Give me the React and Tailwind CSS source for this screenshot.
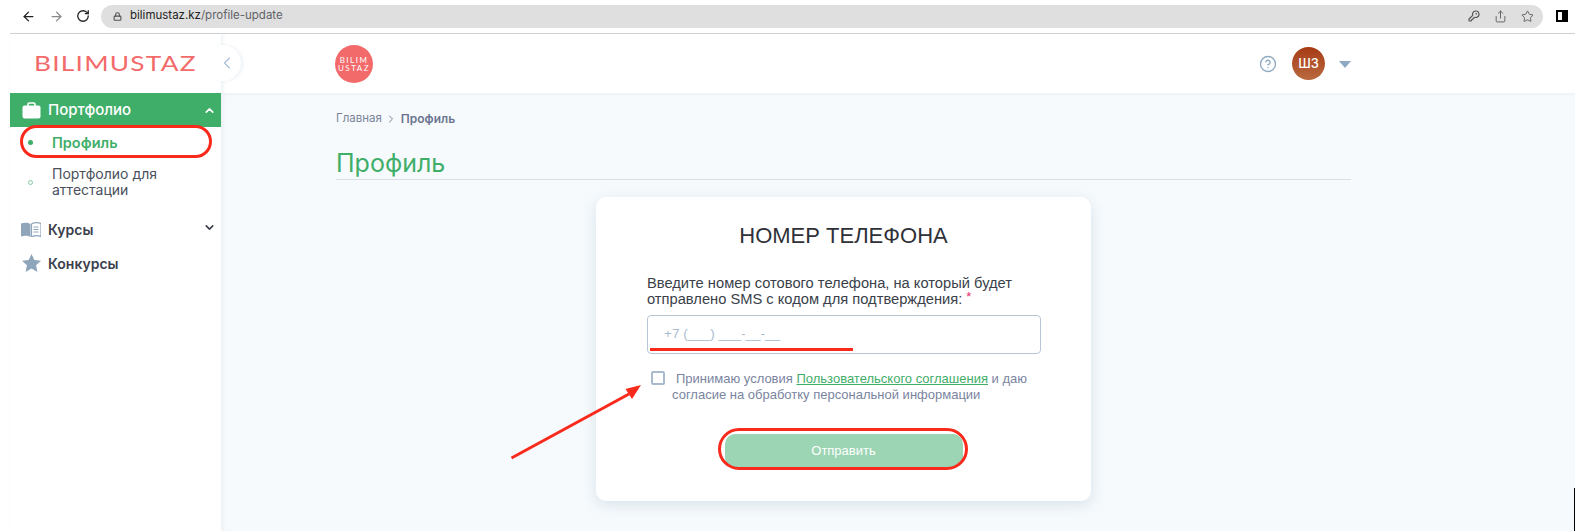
import React from "react";
import { ArrowLeft, ArrowRight, RotateCw, Lock, KeyRound, Share, Star, ChevronLeft, ChevronUp, ChevronDown, ChevronRight, CircleHelp } from "lucide-react";

function Briefcase() {
  return (
    <svg width="19" height="17" viewBox="0 0 19 17" fill="none">
      <path d="M6 4V2.2C6 1.5 6.6 1 7.2 1h4.6c.6 0 1.2.5 1.2 1.2V4" stroke="#fff" strokeWidth="1.6" />
      <rect x="0.5" y="3.5" width="18" height="13" rx="2" fill="#fff" />
    </svg>
  );
}

function Book() {
  return (
    <svg width="20" height="15" viewBox="0 0 20 15">
      <path d="M0 1.5C3 .5 7 .5 9.5 2v13C7 13.5 3 13.5 0 14.5z" fill="#8fa5ba" />
      <path d="M10.5 2C13 .5 17 .5 20 1.5v13c-3-1-7-1-9.5.5z" fill="#fff" stroke="#8fa5ba" strokeWidth="1.2" />
      <path d="M12.5 5h5M12.5 7.5h5M12.5 10h5" stroke="#8fa5ba" strokeWidth="1" />
    </svg>
  );
}

function StarSolid() {
  return (
    <svg width="19" height="18" viewBox="0 0 19 18">
      <path d="M9.5 0l2.8 6 6.7.8-4.9 4.5 1.3 6.6-5.9-3.3-5.9 3.3 1.3-6.6L0 6.8 6.7 6z" fill="#8fa5ba" />
    </svg>
  );
}

function SidePanelIcon() {
  return (
    <div className="flex h-[12px] w-[12px] border-2 border-black">
      <div className="w-1/2 bg-white" />
      <div className="w-1/2 bg-black" />
    </div>
  );
}

function Toolbar() {
  return (
    <div className="flex h-[33px] items-center bg-white pb-[1px]">
      <div className="flex items-center pl-[21px]">
        <ArrowLeft size={15} strokeWidth={2} className="text-[#222]" />
        <ArrowRight size={15} strokeWidth={2} className="ml-[13px] text-[#8a8a8a]" />
        <RotateCw size={14} strokeWidth={2.2} className="ml-[12px] text-[#222]" />
      </div>
      <div className="ml-[11px] flex h-[23px] w-[1442px] items-center rounded-full bg-[#dfdfdf] pl-[12px] pr-[9px]">
        <Lock size={9} strokeWidth={3} className="text-[#555]" />
        <span className="ml-[8px] font-['Inter',sans-serif] text-[11.5px] text-[#222]">bilimustaz.kz<span className="text-[#5f6368]">/profile-update</span></span>
        <div className="ml-auto flex items-center gap-[14px] text-[#555]">
          <KeyRound size={12} strokeWidth={2.4} />
          <Share size={13} strokeWidth={1.6} />
          <Star size={13} strokeWidth={1.6} />
        </div>
      </div>
      <div className="ml-[13px]"><SidePanelIcon /></div>
    </div>
  );
}

function Sidebar() {
  return (
    <aside className="relative z-20 w-[211px] shrink-0 bg-white font-['Inter',sans-serif] shadow-[2px_0_4px_rgba(210,220,230,0.35)]">
      <div className="relative flex h-[59px] items-center pb-[2px] pl-[24px]">
        <span className="origin-left scale-x-[1.25] font-['Lato',sans-serif] text-[21px] font-normal leading-none tracking-[1px] text-[#f26a6a]">BILIMUSTAZ</span>
        <div className="absolute left-[195px] top-[11px] flex h-[36px] w-[36px] items-center justify-center rounded-full bg-white pl-[8px] shadow-[2px_0_3px_rgba(215,225,235,0.45)]">
          <ChevronLeft size={20} strokeWidth={1.4} className="text-[#a9c0d6]" />
        </div>
      </div>
      <div className="flex h-[34px] items-center bg-[#3fae69] pl-[12px] pr-[5px] text-white">
        <Briefcase />
        <span className="ml-[7px] pt-[1px] text-[15px] font-medium">Портфолио</span>
        <ChevronUp size={13} strokeWidth={3} className="ml-auto" />
      </div>
      <div className="flex h-[31px] items-center pl-[18px]">
        <span className="h-[5px] w-[5px] rounded-full bg-[#3fae69]" />
        <span className="ml-[19px] text-[14.5px] font-semibold text-[#3fae69]">Профиль</span>
      </div>
      <div className="flex items-center pl-[18px] pt-[8px]">
        <span className="h-[5px] w-[5px] rounded-full border border-[#7fcb9c]" />
        <span className="ml-[19px] text-[14px] leading-[16px] text-[#4a505c]">Портфолио для<br />аттестации</span>
      </div>
      <div className="mt-[14px] flex h-[34px] items-center pl-[11px] pr-[5px]">
        <Book />
        <span className="ml-[7px] text-[14px] font-semibold text-[#3b404c]">Курсы</span>
        <ChevronDown size={13} strokeWidth={3} className="ml-auto -translate-y-[2px] text-[#3b404c]" />
      </div>
      <div className="flex h-[34px] items-center pl-[12px]">
        <StarSolid />
        <span className="ml-[7px] text-[14px] font-semibold text-[#3b404c]">Конкурсы</span>
      </div>
    </aside>
  );
}

function Header() {
  return (
    <header className="relative z-10 flex h-[59px] items-center bg-white pl-[114px] shadow-[0_1px_3px_rgba(215,225,235,0.4)]">
      <div className="flex h-[38px] w-[38px] flex-col items-center justify-center rounded-full bg-[#f26a6a] font-['Lato',sans-serif] text-[8px] font-normal leading-[8px] tracking-[1.5px] text-white">
        <span>BILIM</span>
        <span>USTAZ</span>
      </div>
      <CircleHelp size={18} strokeWidth={1.8} className="ml-[886px] text-[#8ea9c1]" />
      <div className="ml-[15px] flex h-[33px] w-[33px] items-center justify-center rounded-full bg-gradient-to-b from-[#a63a14] to-[#b9693f] font-['Inter',sans-serif] text-[13px] font-medium text-white">ШЗ</div>
      <div className="ml-[14px] mt-[1px] h-0 w-0 border-x-[6.5px] border-t-[7px] border-x-transparent border-t-[#8ea9c1]" />
    </header>
  );
}

function Card() {
  return (
    <div className="mx-auto mt-[17px] h-[304px] w-[495px] rounded-[10px] bg-white px-[51px] pt-[26px] font-['Liberation_Sans',sans-serif] shadow-[0_4px_14px_rgba(190,205,220,0.5)]">
      <h2 className="text-center text-[22px] leading-[26px] text-[#2f3138]">НОМЕР ТЕЛЕФОНА</h2>
      <p className="mt-[26px] text-[14.7px] leading-[16px] text-[#3a3f4a]">
        Введите номер сотового телефона, на который будет<br />
        отправлено SMS с кодом для подтверждения: <span className="relative -top-[3px] text-[13px] text-[#ef2f6b]">*</span>
      </p>
      <div className="mt-[7px] flex h-[39px] w-[394px] items-center rounded-[4px] border border-[#b6c6d6] pl-[16px] text-[13.5px] text-[#a9bccf]">+7 (___) ___-__-__</div>
      <div className="mt-[16px] flex">
        <span className="mt-[1px] ml-[4px] h-[14px] w-[14px] shrink-0 rounded-[2px] border-2 border-[#a9bacd]" />
        <p className="ml-[7px] pt-[1px] text-[13px] leading-[16px] text-[#7a84a0]">
          <span className="ml-[4px]">Принимаю условия </span>
          <a className="text-[#3fae69] underline">Пользовательского соглашения</a> и даю<br />
          согласие на обработку персональной информации
        </p>
      </div>
      <div className="mt-[31px] flex justify-center">
        <button className="h-[34px] w-[238px] rounded-[10px] bg-[#9bd5b3] text-[13px] text-white">Отправить</button>
      </div>
    </div>
  );
}

function Annotations() {
  return (
    <>
      <div className="absolute left-[20px] top-[125px] z-30 h-[33px] w-[192px] rounded-full border-[3px] border-[#f92a1c]" />
      <div className="absolute left-[650px] top-[348px] z-30 h-[3px] w-[203px] bg-[#f92a1c]" />
      <div className="absolute left-[718px] top-[428px] z-30 h-[42px] w-[250px] rounded-full border-[3px] border-[#f92a1c]" />
      <svg className="absolute left-[505px] top-[380px] z-30" width="140" height="85" viewBox="0 0 140 85" fill="none">
        <path d="M6.5 78L124 14" stroke="#f92a1c" strokeWidth="3" />
        <path d="M136 5L127 19L120.5 9z" fill="#f92a1c" />
      </svg>
      <div className="absolute bottom-0 right-0 z-30 h-[43px] w-[1px] bg-black" />
    </>
  );
}

export default function App() {
  return (
    <div className="relative h-[531px] w-[1575px] overflow-hidden bg-white">
      <Toolbar />
      <div className="ml-[10px] border-t border-[#cfcfcf]" />
      <div className="flex h-[497px] pl-[10px]">
        <Sidebar />
        <main className="min-w-0 flex-1 bg-[#f6fafd]">
          <Header />
          <div className="ml-[115px] w-[1015px] font-['Inter',sans-serif]">
            <div className="flex items-center pt-[18px] text-[12px] leading-[15px] text-[#7b8499]">
              <span className="text-[11.5px]">Главная</span>
              <ChevronRight size={12} strokeWidth={2} className="mx-[3.5px]" />
              <span className="font-semibold text-[#6b7590]">Профиль</span>
            </div>
            <h1 className="mt-[22px] border-b border-[#d8dfe6] text-[25px] leading-[31px] text-[#3fae69]">Профиль</h1>
            <Card />
          </div>
        </main>
      </div>
      <Annotations />
    </div>
  );
}
